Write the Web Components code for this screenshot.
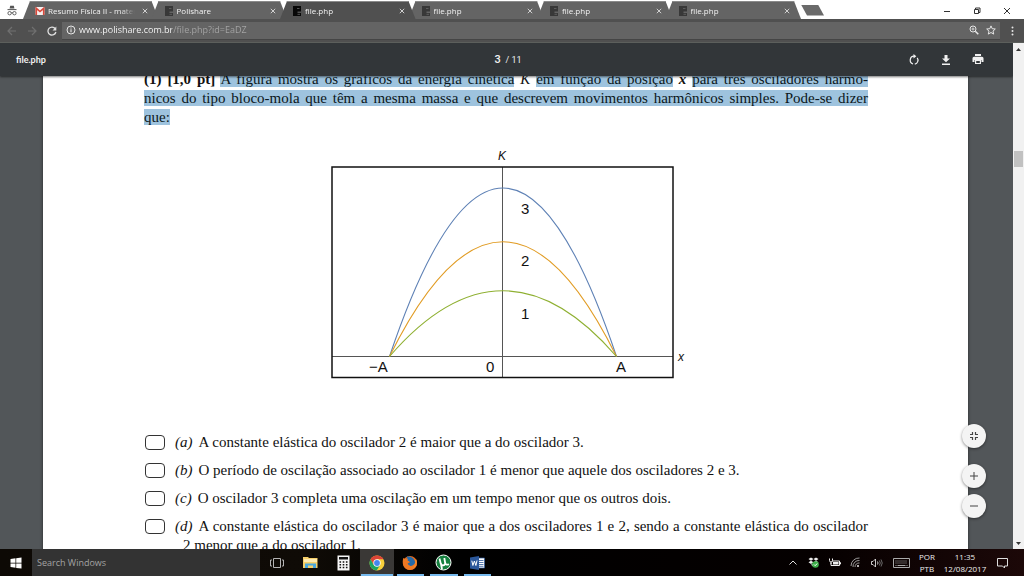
<!DOCTYPE html>
<html lang="pt-BR">
<head>
<meta charset="utf-8">
<title>file.php</title>
<style>
html, body { margin: 0; height: 100%; }
body { overflow: hidden; font-family: "Open Sans", "Noto Sans", sans-serif; font-size: 8px; }
</style>
</head>
<body>
<desktop-screen></desktop-screen>
<script>
const RESET = `*{box-sizing:border-box}
button{appearance:none;border:0;padding:0;margin:0;background:none;color:inherit;font:inherit;display:grid;place-items:center}
input{font:inherit;color:inherit;margin:0}
svg{display:block}`;
const define = (name, css, html) => customElements.define(name, class extends HTMLElement {
  constructor() {
    super();
    this.attachShadow({ mode: 'open' }).innerHTML =
      `<style>${RESET}${css}</style>` + (typeof html === 'function' ? html(this) : html);
  }
});

define('browser-tab', `
:host{display:block;flex:1 1 0;min-width:0;height:18px;margin-left:-7px;position:relative}
:host(:first-child){margin-left:0}
.tab{height:18px;display:flex;align-items:center;padding:0 10px 0 12px;color:#f2f2f2;background:#646464;border-top:1px solid #8a8a8a;
clip-path:polygon(7px 0,calc(100% - 7px) 0,100% 100%,0 100%)}
:host([active]){z-index:1}
:host([active]) .tab{background:#505050}
.title{flex:1;min-width:0;margin-left:3px;overflow:hidden;white-space:nowrap;line-height:14px;color:inherit;text-decoration:none;
-webkit-mask-image:linear-gradient(90deg,#000 calc(100% - 14px),transparent)}
button{width:8px;height:12px;margin-left:6px;color:#d0d0d0}`,
`<div class="tab"><slot name="icon"></slot><a class="title" href="#"><slot></slot></a>
<button aria-label="Fechar guia"><svg width="6" height="6" viewBox="0 0 6 6"><path d="M.8.8l4.4 4.4M5.2.8L.8 5.2" stroke="currentColor"/></svg></button></div>`);

define('page-favicon', `:host{display:block;width:10px;height:10px;color:#383838}:host([dark]){color:#080808}`,
`<svg width="10" height="10" viewBox="0 0 10 10"><path fill="currentColor" d="M1 0h8v5.500H5.500V7H9v3H1z"/><path d="M5 2.500h2.500M5.500 8.300H8" stroke="#686868" stroke-width=".8"/></svg>`);

define('mail-favicon', `:host{display:block;width:10px;height:10px}`,
`<svg width="10" height="10" viewBox="0 0 10 10"><rect x=".5" y="1" width="9" height="8" rx="1" fill="#f6efee"/><path d="M1.3 9V2.3L5 5.5l3.7-3.2V9" fill="none" stroke="#d9483b" stroke-width="1.6"/></svg>`);

define('tab-strip', `
:host{display:flex;height:19px;background:#fff;align-items:flex-end;padding:1px 2px 0 0}
.incognito{width:23px;height:18px;display:grid;place-items:center;color:#555}
.tabs{display:flex;flex:0 1 778px;min-width:0}
.new{width:23px;height:11px;background:#6a6a6a;clip-path:polygon(0 0,17px 0,100% 100%,6px 100%);align-self:center}
.win{display:flex;margin-left:auto;color:#333}
.win button{width:30px;height:17px}
`, () => {
  const t = (title, dark) => `<browser-tab${dark ? ' active' : ''}><page-favicon slot="icon"${dark ? ' dark' : ''}></page-favicon>${title}</browser-tab>`;
  return `<div class="incognito"><svg width="10" height="11" viewBox="0 0 10 11"><path d="M2.6 3.5L3.2.8h3.6l.6 2.7z" fill="currentColor"/><path d="M.5 4.6h9" stroke="currentColor"/><g fill="none" stroke="currentColor" stroke-width=".9"><circle cx="2.6" cy="8.2" r="1.7"/><circle cx="7.4" cy="8.2" r="1.7"/><path d="M4.2 7.8h1.6"/></g></svg></div>
<div class="tabs"><browser-tab><mail-favicon slot="icon"></mail-favicon>Resumo Física II - mateus</browser-tab>${t('Polishare')}${t('file.php', 1)}${t('file.php')}${t('file.php')}${t('file.php')}</div>
<button class="new" aria-label="Nova guia"></button>
<div class="win"><button aria-label="Minimizar"><svg width="8" height="8"><path d="M1 4.5h6" stroke="currentColor"/></svg></button>
<button aria-label="Restaurar"><svg width="8" height="8" fill="none" stroke="currentColor"><path d="M1.5 2.5h4v4h-4zM2.5 2V1h4.500v4.500H6"/></svg></button>
<button aria-label="Fechar"><svg width="8" height="8"><path d="M1 1l6 6M7 1L1 7" stroke="currentColor"/></svg></button></div>`;
});

define('address-bar', `
:host{display:flex;height:24px;align-items:center;background:#505050;color:#e6e6e6;padding:0 7px 0 2px;border-bottom:1px solid #5c5f5c}
.nav{width:20px;height:18px;color:#707070}
.nav.on{color:#e0e0e0}
.box{flex:1;min-width:0;height:18px;display:flex;align-items:center;gap:3px;background:#646464;border-bottom:1px solid #454545;padding:0 2px 0 4px}
input{flex:1;min-width:0;border:0;padding:0;outline:0;height:16px;font-size:9px;line-height:16px;color:transparent;
background:linear-gradient(90deg,#fff 93px,#a6a6a6 93px);-webkit-background-clip:text;background-clip:text}
.box button{width:14px;height:16px}
.menu{width:10px;height:18px;margin-left:7px}`,
`<button class="nav" aria-label="Voltar"><svg width="10" height="10" fill="none" stroke="currentColor" stroke-width="1.200"><path d="M9 5H1.500M5 1L1 5l4 4"/></svg></button>
<button class="nav" aria-label="Avançar"><svg width="10" height="10" fill="none" stroke="currentColor" stroke-width="1.200"><path d="M1 5h7.500M5 1l4 4-4 4"/></svg></button>
<button class="nav on" aria-label="Recarregar"><svg width="10" height="10" viewBox="0 0 10 10"><path d="M8.300 2.800A4 4 0 1 0 8.900 6" fill="none" stroke="currentColor" stroke-width="1.300"/><path d="M9.300.5v4H5.500z" fill="currentColor"/></svg></button>
<div class="box"><svg width="10" height="10" viewBox="0 0 10 10"><circle cx="5" cy="5" r="4" fill="none" stroke="currentColor"/><path d="M5 4.300v3M5 2.500v1" stroke="currentColor" stroke-width="1.100"/></svg>
<input aria-label="Endereço" value="www.polishare.com.br/file.php?id=EaDZ" spellcheck="false">
<button aria-label="Zoom"><svg width="10" height="10" fill="none" stroke="currentColor"><circle cx="4" cy="4" r="3"/><path d="M6.300 6.300L9.300 9.300" stroke-width="1.500"/><path d="M2.500 4h3M4 2.500v3" stroke-width=".8"/></svg></button>
<button aria-label="Favoritos"><svg width="10" height="10" viewBox="0 0 10 10"><path d="M5 .9l1.200 2.800 3.100.3-2.300 2.100.7 3L5 7.500 2.300 9.100l.7-3L.7 4l3.100-.3z" fill="none" stroke="currentColor"/></svg></button></div>
<button class="menu" aria-label="Menu"><svg width="3" height="10" fill="currentColor"><circle cx="1.500" cy="1.500" r="1"/><circle cx="1.500" cy="5" r="1"/><circle cx="1.500" cy="8.500" r="1"/></svg></button>`);

define('pdf-toolbar', `
:host{display:grid;grid-template-columns:1fr auto 1fr;align-items:center;height:33px;padding:0 25px 0 16px;background:#323639;color:#f1f1f1;box-shadow:0 1px 2px #0008;position:relative;z-index:2}
h1{font:700 9px/12px Lato,sans-serif;margin:0}
.pages{display:flex;align-items:center;font:9px/12px Roboto,sans-serif;padding-left:12px}
input{width:8px;border:0;padding:0;background:none;font:500 11px/12px Roboto,sans-serif;margin-right:3px;height:12px}
.acts{display:flex;justify-content:flex-end;gap:12px}
.acts button{width:20px;height:20px}`,
`<h1>file.php</h1><div class="pages"><input aria-label="Página" value="3"><span>/ 11</span></div>
<div class="acts"><button aria-label="Girar"><svg width="12" height="12" viewBox="0 0 12 12"><path d="M6 2.200A4 4 0 0 0 5 10M6.800 10.100A4 4 0 0 0 9.200 3.800" fill="none" stroke="currentColor" stroke-width="1.200"/><path d="M5.500 0v4.500L8.300 2.200z" fill="currentColor"/></svg></button>
<button aria-label="Baixar"><svg width="10" height="10" fill="currentColor"><path d="M3.500 0h3v3.500H9L5 7.300 1 3.500h2.500zM1 8.500h8V10H1z"/></svg></button>
<button aria-label="Imprimir"><svg width="12" height="11" viewBox="0 0 12 11" fill="currentColor"><path d="M3 0h6v2H3zM2 2.800h8a1.500 1.500 0 0 1 1.500 1.500V8H9.500V6h-7v2h-2V4.300A1.500 1.500 0 0 1 2 2.800z"/><path d="M3.600 6.500h4.800v3H3.600z" fill="none" stroke="currentColor" stroke-width="1.200"/></svg></button></div>`);

define('energy-plot', `:host{display:block;width:364px;margin:0 auto}
text{font-family:"Liberation Sans",Arial,sans-serif;font-size:15px;fill:#111}
.i{font-style:italic;font-size:12px}`,
`<svg width="364" height="245" viewBox="324 145 364 245" role="img" aria-label="Energia cinética em função da posição">
<g fill="none" stroke="#555" stroke-width="1"><path d="M332 356.500H673M502.500 167V377"/></g>
<rect x="332" y="167" width="341" height="210.500" fill="none" stroke="#111" stroke-width="1.500"/>
<g fill="none" stroke-width="1.100"><path d="M389.500 356.500Q503 19.500 616.500 356.500" stroke="#5e81b5"/><path d="M389.500 356.500Q503 127 616.500 356.500" stroke="#e19c24"/><path d="M389.500 356.500Q503 225 616.500 356.500" stroke="#8fb032"/></g>
<text class="i" x="498" y="160">K</text><text class="i" x="678" y="361">x</text>
<text x="521" y="214">3</text><text x="521" y="266">2</text><text x="521" y="319">1</text>
<text x="369" y="372">−A</text><text x="486" y="372">0</text><text x="616" y="372">A</text></svg>`);

define('answer-option', `
:host{display:block}
label{display:flex;align-items:flex-start;line-height:19px}
input{appearance:none;flex:none;width:20px;height:15px;margin:2px 18px 0 1px;border:1px solid #333;border-radius:4px;background:#fff}
.t{flex:1;text-indent:-8px;text-align:justify}
i{margin-right:6px}`,
el => `<label><input type="checkbox"><span class="t"><i>(${el.getAttribute('letter')})</i><slot></slot></span></label>`);

define('pdf-page', `
:host{display:block;background:#fff;margin:-6px 45px 0 43px;padding:0 100px 0 101px;color:#111;box-shadow:0 0 3px #0008;font:15px/19px "Liberation Serif","Times New Roman",serif}
p{margin:0;text-align:justify}
p span{display:block;text-align-last:justify;white-space:nowrap}
p span:last-child{text-align-last:left}
mark{background:#9ec3de;color:#0c1720}
energy-plot{margin-top:18px}
.opts{display:grid;gap:9px;margin-top:43px}`,
`<p><span><b>(1)</b> <b>[1,0 pt]</b> <mark>A figura mostra os gráficos da energia cinética</mark> <i>K</i> <mark>em função da posição</mark> <b><i>x</i></b> <mark>para três osciladores harmô-</mark></span>
<span><mark>nicos do tipo bloco-mola que têm a mesma massa e que descrevem movimentos harmônicos simples. Pode-se dizer</mark></span>
<span><mark>que:</mark></span></p>
<energy-plot></energy-plot>
<div class="opts">
<answer-option letter="a">A constante elástica do oscilador 2 é maior que a do oscilador 3.</answer-option>
<answer-option letter="b">O período de oscilação associado ao oscilador 1 é menor que aquele dos osciladores 2 e 3.</answer-option>
<answer-option letter="c">O oscilador 3 completa uma oscilação em um tempo menor que os outros dois.</answer-option>
<answer-option letter="d">A constante elástica do oscilador 3 é maior que a dos osciladores 1 e 2, sendo a constante elástica do oscilador 2 menor que a do oscilador 1.</answer-option>
</div>`);

define('zoom-controls', `
:host{position:absolute;right:27px;bottom:31px;display:flex;flex-direction:column;gap:6px;z-index:1}
button{width:24px;height:24px;border-radius:50%;background:#f4f4f4;color:#444;box-shadow:0 1px 3px #0007}
button:first-of-type{margin-bottom:10px}`,
`<button aria-label="Ajustar à página"><svg width="10" height="10" fill="none" stroke="currentColor" stroke-width="1.200"><path d="M1 3.500h2.500V1M6.500 1v2.500H9M1 6.500h2.500V9M6.500 9V6.500H9"/></svg></button>
<button aria-label="Aumentar zoom"><svg width="10" height="10"><path d="M1 5h8M5 1v8" stroke="currentColor"/></svg></button>
<button aria-label="Diminuir zoom"><svg width="10" height="10"><path d="M1 5h8" stroke="currentColor"/></svg></button>`);

define('scroll-rail', `
:host{display:flex;flex-direction:column;width:11px;background:#f1f1f1;color:#333;padding:1px}
svg{margin:4px auto}
.thumb{height:16px;background:#c1c1c1;margin-top:96px}
svg:last-child{margin-top:auto;margin-bottom:3px}`,
`<svg width="5" height="3"><path d="M0 3L2.500 0 5 3z" fill="currentColor"/></svg><div class="thumb"></div><svg width="5" height="3"><path d="M0 0h5L2.500 3z" fill="currentColor"/></svg>`);

define('pdf-viewer', `
:host{display:flex;flex:1;min-height:0}
.main{flex:1;min-width:0;position:relative;background:#525659;overflow:hidden}`,
`<div class="main"><pdf-toolbar></pdf-toolbar><pdf-page></pdf-page><zoom-controls></zoom-controls></div><scroll-rail></scroll-rail>`);

define('task-button', `
:host{display:block;flex:1}
button{width:100%;height:27px;position:relative}
:host([active]) button{background:#3a3836}
:host([open]) button::after{content:"";position:absolute;left:3px;right:3px;bottom:0;height:2px;background:#76b9ed}
:host([active]) button::after{left:1px;right:1px}`,
el => `<button aria-label="${el.getAttribute('name')}"><slot></slot></button>`);

define('task-bar', `
:host{display:flex;height:27px;flex:none;background:linear-gradient(90deg,#0d0905,#0f0b06 30%,#000 45%,#050000 80%,#1c0808);color:#ddd}
.start{width:32px;height:27px;color:#fff}
input{flex:0 1 228px;min-width:0;height:27px;border:0;padding:0 5px;background:#333;font-size:9px;outline:0}
input::placeholder{color:#a3a3a3;opacity:1}
.apps{display:flex;flex:0 0 234px}
.tray{margin-left:auto;display:flex;align-items:center;padding-right:9px}
.tray button{width:21px;height:27px}
.tray .kb{width:28px}
.tray .lang,.tray .clock{height:27px;font-size:8px;line-height:12px;color:#eee;text-align:center;width:24px}
.tray .clock{width:52px}
.tray .note{width:24px}`,
`<button class="start" aria-label="Iniciar"><svg width="12" height="12" viewBox="0 0 12 12" fill="currentColor"><path d="M.5 2L5.500 1.300v4.400h-5zM6.200 1.200L11.500.5v5.200H6.200zM.5 6.400h5v4.400l-5-.7zM6.200 6.400h5.300v5.200l-5.300-.7z"/></svg></button>
<input type="search" aria-label="Pesquisar" placeholder="Search Windows">
<div class="apps">
<task-button name="Visão de tarefas"><svg width="14" height="12" fill="none" stroke="#b4b4b4"><path d="M3.500 1.500h7v9h-7zM2 3H.5v6H2M12 3h1.500v6H12"/></svg></task-button>
<task-button name="Explorador"><svg width="15" height="13" viewBox="0 0 15 13"><path d="M0 1h5l1 1h8.500v10H0z" fill="#f5cf69"/><path d="M1 3h13v3H1z" fill="#fdeab0"/><path d="M2 12V7.500h11V12h-3V9.500H5V12z" fill="#4aa7dc"/></svg></task-button>
<task-button name="Calculadora"><svg width="13" height="16" viewBox="0 0 13 16"><path d="M.5.500h12v15H.5z" fill="#f7f7f7"/><path d="M2 2h9v2.500H2z" fill="#111"/><path d="M2.500 7h8.500M2.500 9.700h8.500M2.500 12.500h8.500" stroke="#111" stroke-width="1.600" stroke-dasharray="1.600 1.600"/></svg></task-button>
<task-button name="Chrome" active open><svg width="16" height="16" viewBox="0 0 16 16"><circle cx="8" cy="8" r="7.500" fill="#f7cf3b"/><path d="M1.500 4.250A7.500 7.500 0 0 1 14.500 4.250H8L4.750 9.900z" fill="#dc4437"/><path d="M1.500 4.250A7.500 7.500 0 0 0 7.600 15.500L11.200 9.900H4.750z" fill="#1da462"/><circle cx="8" cy="8" r="3.700" fill="#fff"/><circle cx="8" cy="8" r="2.900" fill="#4587ef"/></svg></task-button>
<task-button name="Firefox" open><svg width="16" height="16" viewBox="0 0 16 16"><circle cx="8" cy="8" r="7" fill="#e86b1c"/><path d="M5 1.500A7 7 0 0 1 13 10C11 12 6 11 5.500 8.500L8 7.200 4.500 5z" fill="#246aa9"/><path d="M1.300 3L3.500 4 6 3.500 5.500 5.500 8 7 5.500 8c.5 4 6 4 8-1l1-3c2 7-2 11-6.500 11C2 15-.500 9 1.300 3z" fill="#ef7923"/><path d="M13.200 3.500c2 4 .8 7-2.200 9 3-1 3.500-4.500 2.200-9z" fill="#ffd44c"/></svg></task-button>
<task-button name="µTorrent" open><svg width="17" height="17" viewBox="0 0 17 17"><circle cx="8.500" cy="8.500" r="7.500" fill="#16803f" stroke="#fff"/><path d="M4.500 4.500l1.200 5c.5 2.500 4.500 2.500 4.500-.5L9.300 4M10.200 9c.5 2 2 2 3.800 1.200M6 10l1 5" fill="none" stroke="#fff" stroke-width="1.800"/></svg></task-button>
<task-button name="Word" open><svg width="15" height="14" viewBox="0 0 15 14"><path d="M8 2h6.500v10H8z" fill="#fff" stroke="#2b579a" stroke-width=".7"/><path d="M9 4.500h4.500M9 6.500h4.500M9 8.500h4.500M9 10.300h4.500" stroke="#2b579a" stroke-width=".8"/><path d="M0 1.500L9 0v14L0 12.500z" fill="#2b579a"/><path d="M1.800 4.700l1.100 4.800 1.500-4.500 1.500 4.500L7 4.500" fill="none" stroke="#fff"/></svg></task-button>
</div>
<div class="tray">
<button aria-label="Mostrar ícones ocultos"><svg width="8" height="6"><path d="M.5 4.500L4 1l3.500 3.500" fill="none" stroke="#ddd"/></svg></button>
<button aria-label="Dropbox"><svg width="11" height="11" viewBox="0 0 11 11"><path d="M3 .5l2.500 1.600L3 3.700.5 2.100zM8 .5l2.500 1.600L8 3.700 5.500 2.100zM3 3.700l2.500 1.600L3 6.900.5 5.300zM8 3.700l2.500 1.600L8 6.900 5.500 5.300zM3 7.800l2.500-1.600 2 1.400-2.500 1.600z" fill="#eee"/><circle cx="7.500" cy="7.500" r="3.300" fill="#3dae49"/><path d="M6 7.500l1.200 1.200L9.200 6.500" fill="none" stroke="#fff"/></svg></button>
<button aria-label="Bateria"><svg width="12" height="9" viewBox="0 0 12 9"><path d="M3 3h7.500v4.500H2V5M11.500 4.300v2" fill="none" stroke="#eee"/><path d="M4 4h5.500v2.500H4z" fill="#eee"/><path d="M.5.500v2a1.500 1.500 0 0 0 3 0v-2M2 4v2" stroke="#eee" fill="none"/></svg></button>
<button aria-label="Rede"><svg width="11" height="11" viewBox="0 0 11 11" fill="none" stroke="#aaa" stroke-width=".9"><path d="M1 9A8 8 0 0 1 9.500 1M3 10A6 6 0 0 1 9.500 3.500M5 10A4 4 0 0 1 9.500 6"/><circle cx="8" cy="9" r="1" fill="#eee" stroke="none"/></svg></button>
<button aria-label="Volume"><svg width="12" height="10" viewBox="0 0 12 10" fill="none" stroke="#ddd" stroke-width=".9"><path d="M.5 3.500H2L4.500 1v8L2 6.500H.5z"/><path d="M6.500 3.500q1 1.500 0 3"/><path d="M8.300 2.500q2 2.500 0 5M10 1.500q2.500 3.500 0 7" stroke="#777"/></svg></button>
<button class="kb" aria-label="Teclado"><svg width="17" height="10" viewBox="0 0 17 10" fill="none" stroke="#aaa"><path d="M.5.500h16v9H.5z"/><path d="M2.500 3h12M2.500 5h12" stroke-dasharray="1 1"/><path d="M4.500 7.500h8M2.500 7.500h1M13.500 7.500h1"/></svg></button>
<button class="lang"><span>POR<br>PTB</span></button>
<button class="clock"><span>11:35<br>12/08/2017</span></button>
<button class="note" aria-label="Notificações"><svg width="12" height="12" fill="none" stroke="#ddd"><path d="M.5 1.500h10v7.500H7.500v2L5.500 9h-5z"/></svg></button>
</div>`);

define('desktop-screen', `:host{display:flex;flex-direction:column;height:100vh}
tab-strip,address-bar,pdf-viewer{min-width:0}tab-strip,address-bar{flex:none}`,
`<tab-strip></tab-strip><address-bar></address-bar><pdf-viewer></pdf-viewer><task-bar></task-bar>`);
</script>
</body>
</html>
